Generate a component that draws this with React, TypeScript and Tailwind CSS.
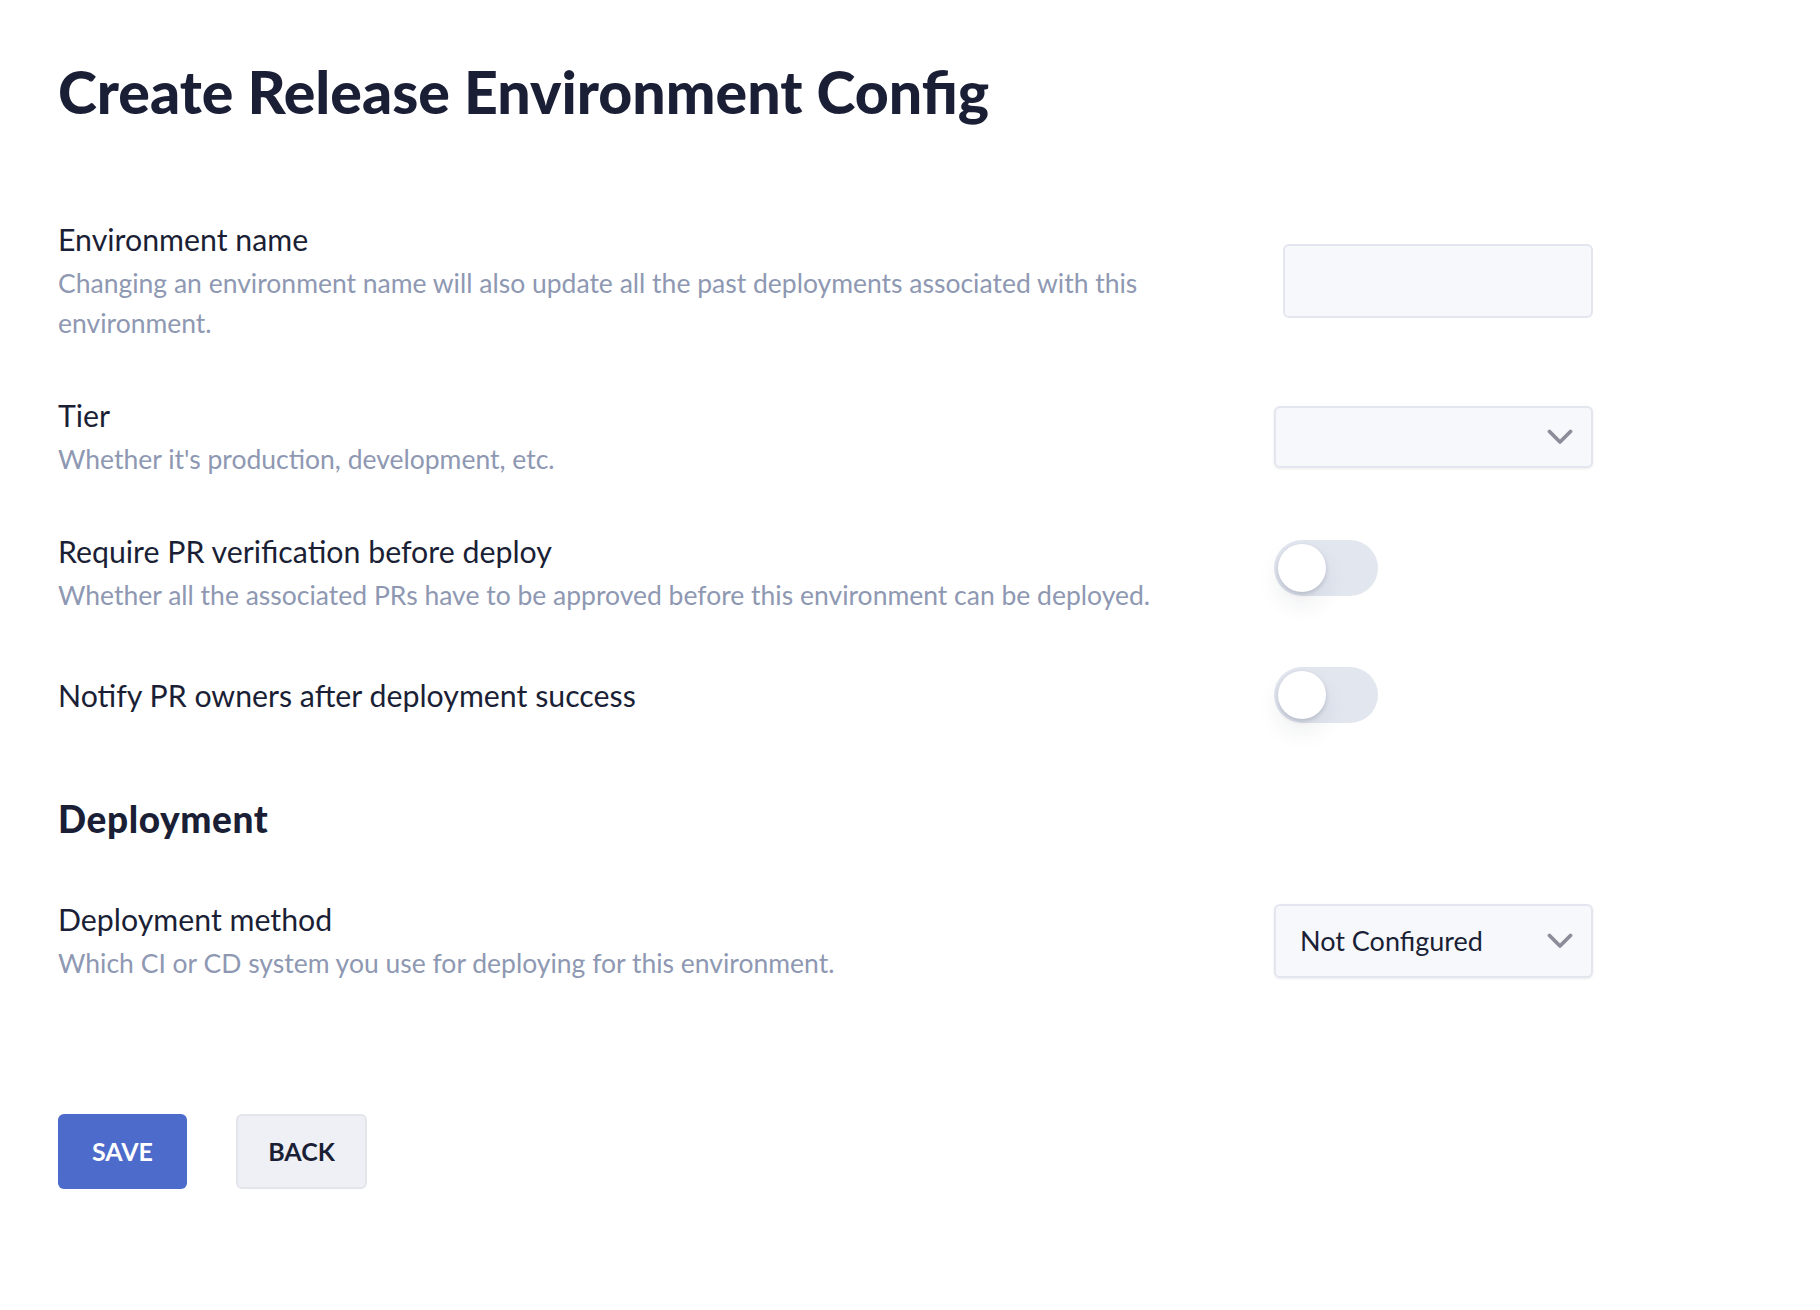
import React from "react";

function Chevron() {
  return (
    <svg width="26" height="16" viewBox="0 0 26 16" fill="none" className="shrink-0">
      <polyline points="2.5,2.5 13,13 23.5,2.5" stroke="#8a8e99" strokeWidth="3.8" strokeLinecap="round" strokeLinejoin="round" />
    </svg>
  );
}

function Toggle({ className = "" }: { className?: string }) {
  return (
    <div className={"relative w-[104px] h-[56px] rounded-full bg-[#e2e6ef] " + className}>
      <div className="absolute left-[4px] top-[4px] w-[48px] h-[48px] rounded-full bg-white shadow-[0_2px_4px_rgba(30,40,70,0.18),0_12px_24px_rgba(30,40,70,0.08)]" />
    </div>
  );
}

function Row({ label, desc, children }: { label: string; desc?: string; children: React.ReactNode }) {
  return (
    <div className="flex items-center w-[1535px]">
      <div className="w-[1160px]">
        <div className="text-[30.3px] leading-[40px] text-[#1b1f36]">{label}</div>
        {desc && <div className="mt-[4px] text-[26.5px] leading-[40px] text-[#8e98b2]">{desc}</div>}
      </div>
      <div className="ml-auto w-[319px] flex">{children}</div>
    </div>
  );
}

export default function App() {
  return (
    <div className="min-h-screen bg-white font-['Lato',sans-serif] pl-[58px] pt-[57px]">
      <h1 className="text-[59px] leading-[70px] font-black text-[#1b1f36]">Create Release Environment Config</h1>

      <div className="mt-[92px] flex flex-col gap-[52px]">
        <Row
          label="Environment name"
          desc="Changing an environment name will also update all the past deployments associated with this environment."
        >
          <input className="ml-auto w-[310px] h-[74px] rounded-[6px] border-2 border-[#e3e6ef] bg-[#f7f8fc] outline-none" />
        </Row>

        <Row label="Tier" desc="Whether it's production, development, etc.">
          <div className="w-full h-[62px] rounded-[6px] border-2 border-[#e3e6ef] bg-[#f7f8fc] shadow-[0_1px_3px_rgba(0,0,0,0.08)] flex items-center justify-end pr-[18px]">
            <Chevron />
          </div>
        </Row>

        <Row label="Require PR verification before deploy" desc="Whether all the associated PRs have to be approved before this environment can be deployed.">
          <Toggle className="mb-[10px]" />
        </Row>

        <Row label="Notify PR owners after deployment success">
          <Toggle />
        </Row>
      </div>

      <h2 className="mt-[75px] text-[37px] leading-[42px] tracking-[0.6px] font-black text-[#1b1f36]">Deployment</h2>

      <div className="mt-[59px]">
        <Row label="Deployment method" desc="Which CI or CD system you use for deploying for this environment.">
          <div className="w-full h-[74px] rounded-[6px] border-2 border-[#e3e6ef] bg-[#f7f8fc] shadow-[0_1px_3px_rgba(0,0,0,0.08)] flex items-center pl-[24px] pr-[18px]">
            <span className="text-[27px] text-[#1b1f36]">Not Configured</span>
            <span className="ml-auto">
              <Chevron />
            </span>
          </div>
        </Row>
      </div>

      <div className="mt-[131px] flex gap-[49px] pb-[120px]">
        <button className="w-[129px] h-[75px] rounded-[6px] bg-[#4c6bca] text-white text-[25px] font-bold">SAVE</button>
        <button className="w-[131px] h-[75px] rounded-[6px] bg-[#eef0f5] border-2 border-[#e3e5eb] text-[#1b1f36] text-[25px] font-bold">BACK</button>
      </div>
    </div>
  );
}
